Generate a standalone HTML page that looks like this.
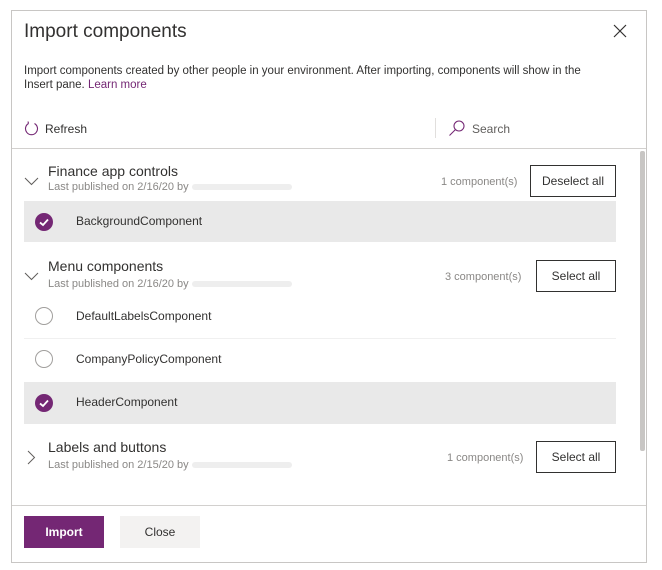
<!DOCTYPE html>
<html><head><style>
*{margin:0;padding:0;box-sizing:border-box}
body{width:662px;height:570px;background:#fff;font-family:"Liberation Sans",sans-serif;color:#323130;position:relative;overflow:hidden}
.a{position:absolute;white-space:nowrap}
.dlg{position:absolute;left:11px;top:10px;width:636px;height:553px;border:1px solid #c8c6c4}
.h{font-size:14px;color:#323130}
.s{font-size:11px;color:#8a8886}
.blur{display:inline-block;width:100px;height:6px;background:#eeeeee;vertical-align:middle;margin-left:3px;border-radius:3px}
.btn{position:absolute;border:1px solid #323130;font-size:12px;text-align:center;background:#fff}
.cnt{font-size:11px;color:#8a8886}
.item{font-size:12px}
.circ{position:absolute;width:18px;height:18px;border-radius:50%;border:1px solid #a19f9d}
.chk{position:absolute;width:18px;height:18px;border-radius:50%;background:#742774}
</style></head><body>
<div class="dlg"></div>
<div class="a" style="left:24px;top:21px;font-size:19px;color:#323130">Import components</div>
<svg class="a" style="left:613px;top:24px" width="14" height="14"><path d="M1 1L13 13M13 1L1 13" stroke="#323130" stroke-width="1.2"/></svg>
<div class="a" style="left:24px;top:64px;font-size:11.5px;line-height:14px;color:#323130">Import components created by other people in your environment. After importing, components will show in the<br>Insert pane. <span style="color:#742774">Learn more</span></div>
<svg class="a" style="left:24px;top:121px" width="15" height="15"><path d="M10.5 2.5A6 6 0 1 1 4.5 2.5" fill="none" stroke="#742774" stroke-width="1.1"/><path d="M4.5 2.5L4 0.5" stroke="#742774" stroke-width="1.1"/></svg>
<div class="a" style="left:45px;top:122px;font-size:12px">Refresh</div>
<div class="a" style="left:435px;top:118px;width:1px;height:20px;background:#e1dfdd"></div>
<svg class="a" style="left:448px;top:119px" width="18" height="18"><circle cx="11" cy="7" r="5" fill="none" stroke="#742774" stroke-width="1.1"/><path d="M7.5 10.5L1.5 16.5" stroke="#742774" stroke-width="1.1"/></svg>
<div class="a" style="left:472px;top:122px;font-size:12px;color:#605e5c">Search</div>
<div class="a" style="left:12px;top:148px;width:634px;height:1px;background:#d2d0ce"></div>
<div class="a" style="left:640px;top:151px;width:5px;height:300px;background:#c8c6c4;border-radius:2px"></div>

<!-- Finance -->
<svg class="a" style="left:24px;top:177px" width="15" height="9"><path d="M1 1L7.5 7.5L14 1" fill="none" stroke="#605e5c" stroke-width="1"/></svg>
<div class="a h" style="left:48px;top:163px">Finance app controls</div>
<div class="a s" style="left:48px;top:181px">Last published on 2/16/20 by<span class="blur"></span></div>
<div class="a cnt" style="left:441px;top:176px">1 component(s)</div>
<div class="btn" style="left:530px;top:165px;width:86px;height:32px;line-height:30px">Deselect all</div>
<div class="a" style="left:24px;top:201px;width:592px;height:41px;background:#e9e9e9"></div>
<div class="chk" style="left:35px;top:213px"></div>
<svg class="a" style="left:35px;top:213px" width="18" height="18"><path d="M5 9.5L8 12L13 6.5" fill="none" stroke="#fff" stroke-width="1.8"/></svg>
<div class="a item" style="left:76px;top:214px">BackgroundComponent</div>

<!-- Menu -->
<svg class="a" style="left:24px;top:272px" width="15" height="9"><path d="M1 1L7.5 7.5L14 1" fill="none" stroke="#605e5c" stroke-width="1"/></svg>
<div class="a h" style="left:48px;top:258px">Menu components</div>
<div class="a s" style="left:48px;top:278px">Last published on 2/16/20 by<span class="blur"></span></div>
<div class="a cnt" style="left:445px;top:271px">3 component(s)</div>
<div class="btn" style="left:536px;top:260px;width:80px;height:32px;line-height:30px">Select all</div>
<div class="circ" style="left:35px;top:307px"></div>
<div class="a item" style="left:76px;top:309px">DefaultLabelsComponent</div>
<div class="a" style="left:24px;top:338px;width:592px;height:1px;background:#f0f0f0"></div>
<div class="circ" style="left:35px;top:350px"></div>
<div class="a item" style="left:76px;top:352px">CompanyPolicyComponent</div>
<div class="a" style="left:24px;top:382px;width:592px;height:42px;background:#e9e9e9"></div>
<div class="chk" style="left:35px;top:394px"></div>
<svg class="a" style="left:35px;top:394px" width="18" height="18"><path d="M5 9.5L8 12L13 6.5" fill="none" stroke="#fff" stroke-width="1.8"/></svg>
<div class="a item" style="left:76px;top:395px">HeaderComponent</div>

<!-- Labels -->
<svg class="a" style="left:27px;top:450px" width="9" height="15"><path d="M1 1L7.5 7.5L1 14" fill="none" stroke="#605e5c" stroke-width="1"/></svg>
<div class="a h" style="left:48px;top:439px">Labels and buttons</div>
<div class="a s" style="left:48px;top:459px">Last published on 2/15/20 by<span class="blur"></span></div>
<div class="a cnt" style="left:447px;top:452px">1 component(s)</div>
<div class="btn" style="left:536px;top:441px;width:80px;height:32px;line-height:30px">Select all</div>

<div class="a" style="left:12px;top:505px;width:634px;height:1px;background:#d2d0ce"></div>
<div class="a" style="left:24px;top:516px;width:80px;height:32px;background:#742774;color:#fff;font-size:12px;font-weight:bold;text-align:center;line-height:32px">Import</div>
<div class="a" style="left:120px;top:516px;width:80px;height:32px;background:#f3f2f1;font-size:12px;text-align:center;line-height:32px">Close</div>
</body></html>
